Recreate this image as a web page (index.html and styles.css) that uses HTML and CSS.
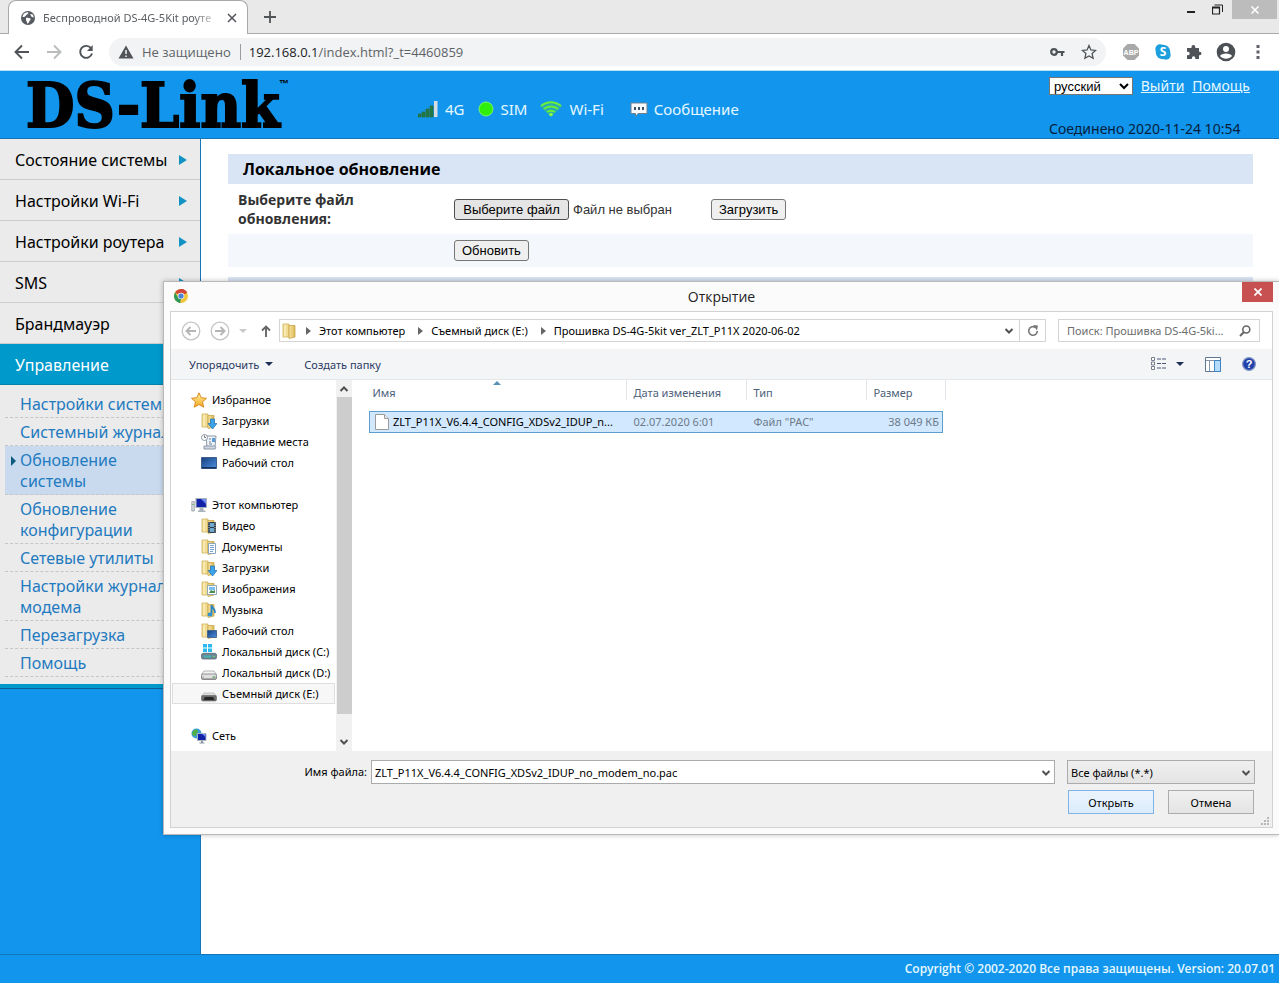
FILE: index.html
```html
<!DOCTYPE html>
<html lang="ru">
<head>
<meta charset="utf-8">
<title>Беспроводной DS-4G-5Kit роутер</title>
<link rel="stylesheet" href="styles.css">
</head>
<body>
<svg class="defs" aria-hidden="true">
  <defs>
    <linearGradient id="gFolder" x1="0" x2="1" y1="0" y2="0"><stop offset="0" stop-color="#f6e3a0"/><stop offset="1" stop-color="#dcb955"/></linearGradient>
    <linearGradient id="gScreen" x1="0" x2="1" y1="0" y2="1"><stop offset="0" stop-color="#16407f"/><stop offset="1" stop-color="#4d8ee0"/></linearGradient>
    <linearGradient id="gDisk" x1="0" x2="0" y1="0" y2="1"><stop offset="0" stop-color="#f4f4f4"/><stop offset="1" stop-color="#9a9a9a"/></linearGradient>
    <linearGradient id="gStar" x1="0" x2="0" y1="0" y2="1"><stop offset="0" stop-color="#fff3a0"/><stop offset="1" stop-color="#f5a623"/></linearGradient>
  </defs>
  <symbol id="folder" viewBox="0 0 16 16"><path d="M1 1h6v13H1z" fill="#f1dc93" stroke="#cfae55" stroke-width=".8"/><path d="M7 2.500h6V14l-6 1.500z" fill="url(#gFolder)" stroke="#c9a548" stroke-width=".8"/><path d="M3 1.500v12" stroke="#fff6cf"/></symbol>
  <symbol id="down" viewBox="0 0 16 16"><use href="#folder"/><path d="M9.500 6h4v4.500H16L11.500 16 7 10.500h2.500z" fill="#3ba4e8" stroke="#1e6fb5" stroke-width=".7"/></symbol>
  <symbol id="recent" viewBox="0 0 16 16"><path d="M5 2h10l-1 11H6z" fill="#eef3f8" stroke="#8b98a6"/><path d="M3 12h11c1 0 1 3 0 3H3z" fill="#cfd8e2" stroke="#8b98a6"/><path d="M8 5h2M8 8h2M8 10h3" stroke="#6e8299"/><path d="M11 4h3v4h-3z" fill="#5a9bd8"/><circle cx="3.500" cy="3.500" r="3" fill="#fff" stroke="#8a97a5"/><path d="M3.500 1.500v2h1.500" stroke="#555" fill="none" stroke-width=".8"/></symbol>
  <symbol id="desktop" viewBox="0 0 16 16"><path d="M.5 2.500h15v11H.5z" fill="url(#gScreen)" stroke="#3f5f8a"/><path d="M1 12h14v1.500H1z" fill="#16345f"/></symbol>
  <symbol id="pc" viewBox="0 0 16 16"><path d="M5 1.500h10.500v9H5z" fill="#1222a8" stroke="#a8b2bd" stroke-width="1.200"/><path d="M10 2h5v5z" fill="#6d8bf0"/><path d="M8.500 11h4v2.500h2V15H7v-1.500h1.500z" fill="#aab2bb"/><path d="M.8 4.500h2.500V14H.8z" fill="#d8dde2" stroke="#858e97" stroke-width=".7"/><path d="M1.500 7.500h1" stroke="#30a030"/></symbol>
  <symbol id="video" viewBox="0 0 16 16"><use href="#folder"/><path d="M7 4h8v11H7z" fill="#2c3b47"/><path d="M9 5h4v4H9zM9 10h4v4H9z" fill="#6fa8cf"/><path d="M8 4.500v10M14 4.500v10" stroke="#dbe4ea" stroke-dasharray="1 1.300"/></symbol>
  <symbol id="docs" viewBox="0 0 16 16"><use href="#folder"/><path d="M7.500 4.500h7v10h-7z" fill="#fff" stroke="#8aa3bd"/><path d="M9 6.500h4M9 8.500h4M9 10.500h4M9 12.500h3" stroke="#4f8cc9" stroke-width=".8"/></symbol>
  <symbol id="images" viewBox="0 0 16 16"><use href="#folder"/><path d="M6.500 4.500h9v9h-9z" fill="#fff" stroke="#90a6ba"/><path d="M8 6h6v3H8z" fill="#76bdf0"/><path d="M8 12l2-3 2 1 2-1v3z" fill="#4c8a56"/></symbol>
  <symbol id="music" viewBox="0 0 16 16"><use href="#folder"/><path d="M10.500 3v9M10.500 3c0 3 4 3 3.500 8" fill="none" stroke="#2583c9" stroke-width="1.800"/><ellipse cx="9" cy="12.500" rx="2.400" ry="1.900" fill="#2f93d8"/></symbol>
  <symbol id="fdesk" viewBox="0 0 16 16"><use href="#folder"/><path d="M6.500 7.500h9v7h-9z" fill="url(#gScreen)" stroke="#4a698f"/></symbol>
  <symbol id="disk" viewBox="0 0 16 16"><path d="M3 6h10l2.500 3.500H.5z" fill="#f4f4f4" stroke="#999" stroke-width=".7"/><rect x=".5" y="9" width="15" height="5.500" rx="1.500" fill="url(#gDisk)" stroke="#777" stroke-width=".8"/><path d="M3 12h8" stroke="#fff"/><path d="M12 12h2" stroke="#40b040"/></symbol>
  <symbol id="windisk" viewBox="0 0 16 16"><path d="M2 0h4v3.500H2zM7 0h4v3.500H7zM2 4.500h4V8H2zM7 4.500h4V8H7z" fill="#29b9ee"/><path d="M3 8h11l1.500 2H.5z" fill="#dfe4e8"/><rect x=".5" y="9.500" width="15" height="5.500" rx="1.500" fill="#6c8796" stroke="#5c6b76" stroke-width=".8"/><path d="M3 12.500h7" stroke="#47b3ad" stroke-width="2"/><path d="M12 12.500h2" stroke="#62d562"/></symbol>
  <symbol id="usb" viewBox="0 0 16 16"><path d="M3 7h10l2.500 3H.5z" fill="#dedede" stroke="#aaa" stroke-width=".6"/><rect x=".5" y="9.500" width="15" height="5.500" rx="1.500" fill="#6c6c6c" stroke="#666" stroke-width=".6"/><path d="M4 11h8l1.500 3h-11z" fill="#262626"/></symbol>
  <symbol id="net" viewBox="0 0 16 16"><circle cx="5.500" cy="5.500" r="5" fill="#3a9cd9"/><path d="M2 3c2-2 5-2 5 0s-2 2-2 4-3 1-4-1zM7 7l3-1-1 3z" fill="#52b043"/><path d="M6.500 5.500H15v7H6.500z" fill="#1222a8" stroke="#a9b4bf"/><path d="M11 6h3.500v3z" fill="#6d8bf0"/><path d="M10 13h2v1.500h1.500v1h-5v-1H10z" fill="#8d98a3"/></symbol>
  <symbol id="star" viewBox="0 0 16 16"><path d="M8 .8l2.200 4.900 5.300.6-4 3.600 1.200 5.300L8 12.500l-4.700 2.700 1.200-5.300-4-3.600 5.300-.6z" fill="url(#gStar)" stroke="#d98a1f"/></symbol>
  <symbol id="chev" viewBox="0 0 10 8"><path d="M1.500 2L5 5.500 8.500 2" fill="none" stroke="#505050" stroke-width="2"/></symbol>
  <symbol id="tri" viewBox="0 0 5 8"><path d="M0 0l5 4-5 4z" fill="#666"/></symbol>
</svg>

<div class="chrome">
  <div class="tabs">
    <div class="tab">
      <svg width="16" height="16" viewBox="0 0 16 16"><circle cx="8" cy="8" r="7" fill="#555b61"/><path d="M3 5c1-2 3-3 5-2.800C9 3 8 4 7 4.500S6 6 5 6.500 4 7 2.500 7zM6 8c2-.5 3 .5 4.500.5.500 1.500-1 2-1.500 3.500-.5 1-1 1.500-2 1.500.5-2-1-2.500-1-3.500zM10 4l3 .5.700 3-2-.5z" fill="#fff"/></svg>
      <span class="tab-title">Беспроводной DS-4G-5Kit роуте</span>
      <button class="plain" type="button" aria-label="Закрыть вкладку"><svg width="10" height="10" viewBox="0 0 10 10"><path d="M1 1l8 8M9 1L1 9" stroke="#505458" stroke-width="1.500"/></svg></button>
    </div>
    <button class="plain newtab" type="button" aria-label="Новая вкладка"><svg width="12" height="12" viewBox="0 0 12 12"><path d="M6 0v12M0 6h12" stroke="#505458" stroke-width="1.800"/></svg></button>
    <div class="win">
      <button class="plain" type="button" aria-label="Свернуть"><svg width="8" height="8" viewBox="0 0 8 8"><path d="M0 6h8" stroke="#222" stroke-width="2"/></svg></button>
      <button class="plain" type="button" aria-label="Развернуть"><svg width="11" height="11" viewBox="0 0 11 11"><path d="M.5 3h7v7h-7zM.5 4h7" fill="none" stroke="#222" stroke-width="1.200"/><path d="M2.500 1h8v7" fill="none" stroke="#222"/></svg></button>
      <button class="plain win-close" type="button" aria-label="Закрыть"><svg width="8" height="8" viewBox="0 0 8 8"><path d="M.5.5l7 7M7.500.5l-7 7" stroke="#fff" stroke-width="1.500"/></svg></button>
    </div>
  </div>
  <div class="toolbar">
    <button class="plain" type="button" aria-label="Назад"><svg width="16" height="16" viewBox="0 0 16 16"><path d="M15 8H2M8 1.500L1.500 8 8 14.500" fill="none" stroke="#505458" stroke-width="1.900"/></svg></button>
    <button class="plain" type="button" aria-label="Вперёд"><svg width="16" height="16" viewBox="0 0 16 16"><path d="M1 8h13M8 1.500L14.500 8 8 14.500" fill="none" stroke="#b9bbbd" stroke-width="1.900"/></svg></button>
    <button class="plain" type="button" aria-label="Обновить страницу"><svg width="16" height="16" viewBox="0 0 16 16"><path d="M13 4.200A6 6 0 1 0 14 9.500" fill="none" stroke="#505458" stroke-width="1.900"/><path d="M14.700 1v6H9z" fill="#505458"/></svg></button>
    <div class="omnibox">
      <svg width="16" height="14" viewBox="0 0 16 14"><path d="M8 .5L15.500 13.500H.5z" fill="#505458"/><path d="M8 5v4M8 10.500v1.500" stroke="#f1f3f4" stroke-width="1.500"/></svg>
      <span class="secure">Не защищено</span>
      <span class="url"><b>192.168.0.1</b>/index.html?_t=4460859</span>
      <svg width="15" height="10" viewBox="0 0 15 10"><circle cx="4" cy="5" r="2.800" fill="none" stroke="#505458" stroke-width="2.200"/><path d="M6 5h8.500M12 5v4" stroke="#505458" stroke-width="2.200" fill="none"/></svg>
      <svg width="16" height="16" viewBox="0 0 16 16"><path d="M8 1.500l1.900 4.400 4.700.5-3.500 3.200 1 4.700L8 11.900l-4.100 2.400 1-4.700L1.400 6.400l4.700-.5z" fill="none" stroke="#505458" stroke-width="1.300"/></svg>
    </div>
    <div class="exts">
      <svg width="18" height="18" viewBox="0 0 18 18"><path d="M5.500 1h7L17 5.500v7L12.500 17h-7L1 12.500v-7z" fill="#a9a9a9"/><text x="9" y="11.500" text-anchor="middle" class="abp">ABP</text></svg>
      <svg width="18" height="18" viewBox="0 0 18 18"><circle cx="9" cy="9" r="7.300" fill="#1e9fdd"/><circle cx="6" cy="6" r="4.700" fill="#1e9fdd"/><circle cx="12" cy="12" r="4.700" fill="#1e9fdd"/><text x="9" y="13" text-anchor="middle" class="skype">S</text></svg>
      <svg width="16" height="16" viewBox="0 0 16 16"><path d="M1 4h4.500V2.800a1.900 1.900 0 0 1 3.800 0V4H13v3.700h.7a1.800 1.800 0 0 1 0 3.600H13V15H9.300v-1a1.700 1.700 0 0 0-3.400 0v1H1v-3.800h1a1.700 1.700 0 0 0 0-3.400H1z" fill="#505458"/></svg>
      <svg width="20" height="20" viewBox="0 0 20 20"><circle cx="10" cy="10" r="9.300" fill="#4c5055"/><circle cx="10" cy="7" r="3" fill="#fff"/><path d="M4 14c1-3.500 11-3.500 12 0-3 3.500-9 3.500-12 0z" fill="#fff"/></svg>
      <svg width="4" height="14" viewBox="0 0 4 14"><path d="M.5 0h3v3h-3zM.5 5.500h3v3h-3zM.5 11h3v3h-3z" fill="#5f6368"/></svg>
    </div>
  </div>
</div>

<header class="header">
  <h1 class="logo">DS-Link<sup>™</sup></h1>
  <ul class="status">
    <li><svg width="20" height="17" viewBox="0 0 20 17"><path d="M0 13h3v3H0zM4 11h3v5H4zM8 8h3v8H8zM12 5h3v11h-3z" fill="#1d7a45" stroke="#2c7040" stroke-width=".8"/><path d="M16 0h3.500v16H16z" fill="#d5dde2"/></svg>4G</li>
    <li><svg width="16" height="16" viewBox="0 0 16 16"><circle cx="8" cy="8" r="7" fill="#2ff00a" stroke="#7cf46d"/></svg>SIM</li>
    <li><svg width="22" height="16" viewBox="0 0 22 16"><path d="M0 5.500C6-1 16-1 22 5.500L11 16z" fill="#3cc07a" opacity=".55"/><path d="M1 5c6-5 14-5 20 0M4 8c4-3.500 10-3.500 14 0M7 11c3-2 5-2 8 0" fill="none" stroke="#6df03c" stroke-width="2"/><circle cx="11" cy="13.500" r="1.800" fill="#8cff3c"/></svg>Wi-Fi</li>
    <li class="msg"><svg width="18" height="16" viewBox="0 0 18 16"><path d="M1 2h16v10.500H8L5.500 15.500v-3H1z" fill="#f6f8fa" stroke="#6f8191"/><path d="M4 6h2v3H4zM8 6h2v3H8zM12 6h2v3h-2z" fill="#3b5368"/></svg>Сообщение</li>
  </ul>
  <div class="account">
    <div class="account-row">
      <select class="lang" aria-label="Язык"><option>русский</option></select>
      <a href="#">Выйти</a>
      <a href="#">Помощь</a>
    </div>
    <p>Соединено 2020-11-24 10:54</p>
  </div>
</header>

<div class="stage">
  <nav class="sidebar">
    <ul class="menu">
      <li><a class="more" href="#">Состояние системы</a></li>
      <li><a class="more" href="#">Настройки Wi-Fi</a></li>
      <li><a class="more" href="#">Настройки роутера</a></li>
      <li><a class="more" href="#">SMS</a></li>
      <li><a class="more" href="#">Брандмауэр</a></li>
      <li><a class="active" href="#">Управление</a></li>
    </ul>
    <ul class="submenu">
      <li><a href="#">Настройки системы</a></li>
      <li><a href="#">Системный журнал</a></li>
      <li class="current"><a href="#">Обновление системы</a></li>
      <li><a href="#">Обновление конфигурации</a></li>
      <li><a href="#">Сетевые утилиты</a></li>
      <li><a href="#">Настройки журнала модема</a></li>
      <li><a href="#">Перезагрузка</a></li>
      <li><a href="#">Помощь</a></li>
    </ul>
  </nav>

  <main class="content">
    <h2>Локальное обновление</h2>
    <div class="row">
      <strong>Выберите файл обновления:</strong>
      <div class="row-ctl">
        <button class="btn pressed" type="button">Выберите файл</button>
        <span class="nofile">Файл не выбран</span>
        <button class="btn" type="button">Загрузить</button>
      </div>
    </div>
    <div class="row alt">
      <span></span>
      <div class="row-ctl"><button class="btn" type="button">Обновить</button></div>
    </div>
    <div class="next"></div>
  </main>

  <section class="dialog" role="dialog" aria-labelledby="dlg-title">
    <div class="dlg-title">
      <svg width="14" height="14" viewBox="0 0 14 14"><circle cx="7" cy="7" r="7" fill="#f0c63c"/><path d="M7 7L1 3.400A7 7 0 0 1 13.100 3.700z" fill="#cf4638"/><path d="M7 0a7 7 0 0 1 6.100 3.700H7z" fill="#cf4638"/><path d="M1 3.400L4.500 9 6.500 14A7 7 0 0 1 1 3.400z" fill="#2f9957"/><path d="M4 8.500l3 1.500-1 4-3-2z" fill="#2f9957"/><circle cx="7" cy="7" r="3.300" fill="#f4f4f4"/><circle cx="7" cy="7" r="2.600" fill="#4a83d4"/></svg>
      <h3 id="dlg-title">Открытие</h3>
      <button class="plain dlg-close" type="button" aria-label="Закрыть"><svg width="8" height="8" viewBox="0 0 8 8"><path d="M.5.5l7 7M7.500.5l-7 7" stroke="#fff" stroke-width="1.700"/></svg></button>
    </div>
    <div class="frame">
      <div class="nav">
        <button class="plain" type="button" aria-label="Назад"><svg width="20" height="20" viewBox="0 0 20 20"><circle cx="10" cy="10" r="8.800" fill="none" stroke="#c4c4c4" stroke-width="1.300"/><path d="M15 10H6M9.500 6L5.500 10l4 4" fill="none" stroke="#b5b5b5" stroke-width="1.900"/></svg></button>
        <button class="plain" type="button" aria-label="Вперёд"><svg width="20" height="20" viewBox="0 0 20 20"><circle cx="10" cy="10" r="8.800" fill="none" stroke="#c4c4c4" stroke-width="1.300"/><path d="M5 10h9M10.500 6l4 4-4 4" fill="none" stroke="#b5b5b5" stroke-width="1.900"/></svg></button>
        <button class="plain" type="button" aria-label="Последние расположения"><svg width="8" height="4" viewBox="0 0 8 4"><path d="M0 0h8L4 4z" fill="#c9c9c9"/></svg></button>
        <button class="plain up" type="button" aria-label="Вверх"><svg width="10" height="12" viewBox="0 0 10 12"><path d="M5 12V2M1 5.500L5 1.500l4 4" fill="none" stroke="#666" stroke-width="1.900"/></svg></button>
        <div class="address">
          <svg width="16" height="16"><use href="#folder"/></svg>
          <svg class="sep" width="5" height="8"><use href="#tri"/></svg><span>Этот компьютер</span>
          <svg class="sep" width="5" height="8"><use href="#tri"/></svg><span>Съемный диск (E:)</span>
          <svg class="sep" width="5" height="8"><use href="#tri"/></svg><span>Прошивка DS-4G-5kit ver_ZLT_P11X 2020-06-02</span>
          <button class="plain drop" type="button" aria-label="Предыдущие расположения"><svg width="10" height="8"><use href="#chev"/></svg></button>
          <button class="plain refresh" type="button" aria-label="Обновить"><svg width="12" height="12" viewBox="0 0 12 12"><path d="M8.500 2.500A4.300 4.300 0 1 0 10.300 6" fill="none" stroke="#777" stroke-width="1.600"/><path d="M6 0l5 .5-1 5z" fill="#777"/></svg></button>
        </div>
        <div class="search">
          <input type="text" aria-label="Поиск" placeholder="Поиск: Прошивка DS-4G-5ki...">
          <svg width="12" height="12" viewBox="0 0 12 12"><circle cx="7.300" cy="4.500" r="3.500" fill="none" stroke="#666" stroke-width="1.600"/><path d="M5 7L1 11" stroke="#666" stroke-width="2"/></svg>
        </div>
      </div>

      <div class="commands">
        <button class="plain" type="button">Упорядочить <svg width="8" height="4" viewBox="0 0 8 4"><path d="M0 0h8L4 4z" fill="#1e3058"/></svg></button>
        <button class="plain" type="button">Создать папку</button>
        <span class="views">
          <button class="plain" type="button" aria-label="Вид"><svg width="16" height="14" viewBox="0 0 16 14"><path d="M.5.500h3v3h-3zM.5 5h3v3h-3zM.5 9.500h3v3h-3z" fill="#fff" stroke="#777d8a"/><path d="M6 2h4M11 2h4M6 6.500h4M11 6.500h4M6 11h4M11 11h4" stroke="#4a5878"/></svg><svg width="8" height="4" viewBox="0 0 8 4"><path d="M0 0h8L4 4z" fill="#1e3058"/></svg></button>
          <button class="plain" type="button" aria-label="Область просмотра"><svg width="16" height="15" viewBox="0 0 16 15"><path d="M.5.500h15v14H.5z" fill="#fff" stroke="#5f7890"/><path d="M1 3.500h14M4.500 4v10" stroke="#8796a6"/><path d="M9.500 3.500h6v11h-6z" fill="#b5dcfb" stroke="#3c86c6"/></svg></button>
          <button class="plain" type="button" aria-label="Справка"><svg width="14" height="14" viewBox="0 0 14 14"><circle cx="7" cy="7" r="6.400" fill="#2142a8" stroke="#8597c8" stroke-width="1.200"/><text x="7" y="11" text-anchor="middle" class="help">?</text></svg></button>
        </span>
      </div>

      <div class="panes">
        <div class="tree">
          <ul>
            <li class="root"><svg width="16" height="16"><use href="#star"/></svg>Избранное</li>
            <li><svg width="16" height="16"><use href="#down"/></svg>Загрузки</li>
            <li><svg width="16" height="16"><use href="#recent"/></svg>Недавние места</li>
            <li><svg width="16" height="16"><use href="#desktop"/></svg>Рабочий стол</li>
          </ul>
          <ul>
            <li class="root"><svg width="16" height="16"><use href="#pc"/></svg>Этот компьютер</li>
            <li><svg width="16" height="16"><use href="#video"/></svg>Видео</li>
            <li><svg width="16" height="16"><use href="#docs"/></svg>Документы</li>
            <li><svg width="16" height="16"><use href="#down"/></svg>Загрузки</li>
            <li><svg width="16" height="16"><use href="#images"/></svg>Изображения</li>
            <li><svg width="16" height="16"><use href="#music"/></svg>Музыка</li>
            <li><svg width="16" height="16"><use href="#fdesk"/></svg>Рабочий стол</li>
            <li><svg width="16" height="16"><use href="#windisk"/></svg>Локальный диск (C:)</li>
            <li><svg width="16" height="16"><use href="#disk"/></svg>Локальный диск (D:)</li>
            <li class="sel"><svg width="16" height="16"><use href="#usb"/></svg>Съемный диск (E:)</li>
          </ul>
          <ul>
            <li class="root"><svg width="16" height="16"><use href="#net"/></svg>Сеть</li>
          </ul>
        </div>
        <div class="scroll">
          <svg class="flip" width="10" height="8"><use href="#chev"/></svg>
          <span class="thumb"></span>
          <svg width="10" height="8"><use href="#chev"/></svg>
        </div>
        <div class="files">
          <table>
            <colgroup><col class="c-name"><col class="c-date"><col class="c-type"><col class="c-size"></colgroup>
            <thead><tr><th class="sorted">Имя</th><th>Дата изменения</th><th>Тип</th><th>Размер</th></tr></thead>
            <tbody><tr>
              <td class="name"><span><svg width="14" height="16" viewBox="0 0 14 16"><path d="M.5.500h9l4 4v11H.5z" fill="#fff" stroke="#9b9b9b"/><path d="M9.500.5v4h4" fill="#eee" stroke="#9b9b9b"/></svg>ZLT_P11X_V6.4.4_CONFIG_XDSv2_IDUP_n...</span></td>
              <td>02.07.2020 6:01</td><td>Файл "PAC"</td><td class="size">38 049 КБ</td>
            </tr></tbody>
          </table>
        </div>
      </div>

      <form class="dlg-foot">
        <label for="fname">Имя файла:</label>
        <div class="combo fname"><input id="fname" type="text" value="ZLT_P11X_V6.4.4_CONFIG_XDSv2_IDUP_no_modem_no.pac"><svg width="10" height="8"><use href="#chev"/></svg></div>
        <div class="combo ftype"><select aria-label="Тип файлов"><option>Все файлы (*.*)</option></select><svg width="10" height="8"><use href="#chev"/></svg></div>
        <div class="actions">
          <button class="wbtn primary" type="button">Открыть</button>
          <button class="wbtn" type="button">Отмена</button>
        </div>
        <svg class="grip" width="8" height="8" viewBox="0 0 8 8"><path d="M6 0h2v2H6zM3 3h2v2H3zM6 3h2v2H6zM0 6h2v2H0zM3 6h2v2H3zM6 6h2v2H6z" fill="#b8b8b8"/></svg>
      </form>
    </div>
  </section>
</div>

<footer class="footer">Copyright © 2002-2020 Все права защищены. Version: 20.07.01</footer>
</body>
</html>
```
FILE: styles.css
```css
* { box-sizing: border-box; }
body {
  margin: 0;
  min-height: 100vh;
  display: flex;
  flex-direction: column;
  font-family: "Noto Sans", "Open Sans", sans-serif;
  font-size: 16px;
  color: #000;
  background: #fff;
}
ul, h1, h2, h3, p { margin: 0; padding: 0; list-style: none; }
svg { flex: none; display: block; }
button, input, select { font: inherit; color: inherit; }
.defs { position: absolute; width: 0; height: 0; }
.plain { border: 0; padding: 0; background: none; display: flex; align-items: center; justify-content: center; }

/* browser window */
.chrome { font-family: "Open Sans", sans-serif; }
.tabs { display: flex; height: 34px; background: #e9e9e9; border-bottom: 1px solid #a9a9a9; }
.tab {
  display: flex; align-items: center; gap: 7px;
  width: 240px; height: 34px; margin-left: 8px; padding: 0 10px 0 11px;
  background: #fff; border: 1px solid #a9a9a9; border-bottom: 0; border-radius: 8px 8px 0 0;
  font: 11px "Noto Sans", sans-serif; color: #5a5e62;
}
.tab-title {
  flex: 1; overflow: hidden; white-space: nowrap;
  mask-image: linear-gradient(to right, #000 85%, transparent);
}
.newtab { margin-left: 16px; }
.win { display: flex; margin-left: auto; align-items: flex-start; gap: 17px; padding-right: 2px; }
.win .plain { height: 19px; }
.win .win-close { width: 45px; background: #bcbcbc; margin-left: -8px; }
.toolbar { display: flex; align-items: center; gap: 16px; height: 37px; padding: 0 19px 0 14px; border-bottom: 1px solid #b9dff2; }
.omnibox {
  flex: 1; display: flex; align-items: center; gap: 8px;
  height: 28px; margin-left: -1px; padding: 0 9px; border-radius: 14px;
  background: #f1f3f4; color: #5f6368; font-size: 13px;
}
.secure { padding-right: 9px; border-right: 1px solid #9a9da0; line-height: 16px; }
.url { flex: 1; }
.url b { font-weight: 400; color: #202124; }
.omnibox svg:last-child { margin-left: 8px; }
.exts { display: flex; align-items: center; gap: 14px; }
.exts svg:last-child { margin-left: 6px; }
.abp { font: bold 7px "Liberation Sans", sans-serif; fill: #fff; }
.skype { font: bold 12px "Open Sans", sans-serif; fill: #fff; }

/* router page header */
.header { display: flex; height: 68px; padding-left: 26px; background: #1296ed; border-bottom: 1px solid #1776b8; }
.logo {
  width: 392px; white-space: nowrap;
  font: bold 62px/70px "DejaVu Serif Condensed", "DejaVu Serif", serif;
  -webkit-text-stroke: 2px #000;
}
.logo sup { font: bold 10px/10px "Liberation Sans", sans-serif; vertical-align: 40px; margin-left: -1px; -webkit-text-stroke: 0; }
.status { display: flex; align-items: center; gap: 13px; padding-top: 9px; color: #e6f8ff; font-size: 15px; }
.status li { display: flex; align-items: center; gap: 7px; }
.status .msg { margin-left: 13px; gap: 6px; }
.account { min-width: 230px; margin-left: auto; padding: 5px 29px 0 0; font-size: 14px; display: flex; flex-direction: column; justify-content: space-between; }
.account-row { display: flex; align-items: center; justify-content: space-between; gap: 6px; line-height: 20px; }
.account a { color: #e6f8ff; }
.account p { line-height: 18px; color: #06203c; white-space: nowrap; }
.lang { width: 84px; height: 18px; padding: 0; font: 13px "Liberation Sans", sans-serif; background: #fff; border: 1px solid #767676; color: #000; }

/* body */
.stage { flex: 1; display: flex; position: relative; }
.sidebar { width: 201px; background: #1296ed; border-right: 1px solid #1776b8; }
.menu { background: #ebebeb; }
.menu a {
  display: flex; align-items: center; justify-content: space-between;
  height: 41px; padding: 2px 13px 0 15px; border-bottom: 1px solid #ccc;
  color: #000; text-decoration: none; font-size: 16px; white-space: nowrap;
}
.menu .more::after { content: ""; border: 5px solid transparent; border-left: 8px solid #1492c4; border-right: 0; }
.menu .active { background: #09c; color: #fff; border-color: #0681aa; }
.submenu { padding: 5px 0 7px 5px; background: #ebebeb; border-bottom: 4px solid #09c; box-shadow: 0 1px #0b5f99; }
.submenu li { padding: 4px 15px 2px 15px; border-bottom: 1px dashed #c6c6c6; line-height: 21px; position: relative; }
.submenu a { color: #1f7ac0; text-decoration: none; }
.submenu .current { background: #c9daef; }
.current::before { content: ""; position: absolute; left: 6px; top: 10px; border: 5px solid transparent; border-left: 5px solid #0d5c80; border-right: 0; }

.content { flex: 1; padding: 15px 26px 0 27px; font-family: "Open Sans", sans-serif; }
.content h2 { height: 30px; padding-left: 15px; background: #d9e4f4; font-size: 16px; line-height: 30px; }
.row { display: grid; grid-template-columns: 216px 1fr; align-items: center; min-height: 50px; padding-left: 10px; color: #333; font-size: 14px; line-height: 19px; }
.row strong { padding-right: 60px; }
.row-ctl { display: flex; align-items: center; }
.row.alt { min-height: 33px; background: #f4f7fb; }
.btn { height: 21px; padding: 0 7px; border: 1px solid #767676; border-radius: 3px; background: #efefef; font: 13px/17px "Liberation Sans", sans-serif; color: #000; }
.pressed { min-width: 115px; background: #e5e5e5; border-color: #4f4f4f; }
.nofile { width: 142px; padding-left: 4px; font: 13px "Liberation Sans", sans-serif; }
.next { height: 30px; margin-top: 10px; background: #d9e4f4; }

/* file dialog */
.dialog {
  position: absolute; top: 142px; left: 163px; right: 0;
  padding: 0 6px 6px; background: #fbfbfb;
  border: 1px solid #b9b9b9; border-right: 0;
  box-shadow: 0 0 5px rgba(0,0,0,.25);
  font-size: 11px;
}
.dlg-title { display: grid; grid-template-columns: 31px 1fr 31px; align-items: start; height: 29px; }
.dlg-title > svg { margin: 7px 0 0 4px; }
.dlg-title h3 { font: 14px/30px "Open Sans", sans-serif; text-align: center; color: #222; }
.dlg-close { height: 20px; background: #c75050; }
.frame { border: 1px solid #d2d2d2; background: #fff; }
.nav { display: flex; align-items: center; height: 37px; padding: 0 12px 0 10px; gap: 9px; }
.nav .up { margin: 0 -1px 0 5px; }
.address { flex: 1; display: flex; align-items: center; height: 23px; padding-left: 2px; border: 1px solid #d5d5d5; white-space: nowrap; }
.address .sep { margin: 0 8px; }
.address span + .sep { margin-left: 13px; }
.drop { margin-left: auto; width: 20px; }
.nav .refresh { width: 26px; align-self: stretch; border-left: 1px solid #d5d5d5; }
.search { display: flex; align-items: center; width: 202px; height: 23px; margin-left: 3px; padding: 0 8px; border: 1px solid #d5d5d5; }
.search input { flex: 1; min-width: 0; border: 0; padding: 0; background: none; }
.search input::placeholder { color: #6d6d6d; opacity: 1; }
.commands { display: flex; align-items: center; height: 31px; padding: 0 16px 0 18px; gap: 31px; background: #f4f5f7; border-bottom: 1px solid #e4e6e9; color: #2a3a63; }
.commands .plain { gap: 6px; }
.views { display: flex; margin-left: auto; gap: 21px; }
.views .plain { gap: 9px; }
.help { font: bold 11px "Liberation Sans", sans-serif; fill: #fff; }

.panes { display: flex; height: 371px; }
.tree { width: 165px; padding-top: 9px; overflow: hidden; }
.tree ul { margin-bottom: 21px; }
.tree li { display: flex; align-items: center; gap: 5px; height: 21px; padding-left: 28px; margin-left: 1px; border: 1px solid transparent; white-space: nowrap; }
.tree .root { padding-left: 18px; }
.tree .sel { margin-right: 1px; background: #f7f7f7; border-color: #dedede; }
.scroll { display: flex; flex-direction: column; align-items: center; justify-content: space-between; width: 16px; padding: 5px 0; background: #f1f1f1; }
.thumb { flex: 1; width: 15px; margin: 4px 0 24px; background: #cdcdcd; }
.flip { transform: scaleY(-1); }
.files { flex: 1; padding-left: 17px; }
.files table { width: 574px; table-layout: fixed; border-collapse: collapse; }
.c-name { width: 257px; }
.c-date, .c-type { width: 120px; }
.files th { position: relative; height: 31px; padding: 0 0 6px 3px; text-align: left; font-weight: 400; color: #4c607a; border: 0; }
.files th + th { padding-left: 7px; }
.files th::after { content: ""; position: absolute; right: 0; top: 0; width: 1px; height: 20px; background: #e3e6ea; }
.files th:last-child::after { right: -3px; }
.sorted::before { content: ""; position: absolute; left: 123px; top: 1px; border: 4px solid transparent; border-bottom: 4px solid #5791b4; border-top: 0; }
.files td { height: 21px; padding: 0 3px 0 7px; color: #6d7a88; background: #d1e8ff; border: 1px solid #5f9fd0; border-width: 1px 0; white-space: nowrap; }
.files td:first-child { padding-left: 5px; border-left-width: 1px; }
.files td:last-child { border-right-width: 1px; text-align: right; }
.name span { display: flex; align-items: center; gap: 4px; color: #000; }

.dlg-foot { position: relative; display: grid; grid-template-columns: 196px 1fr 196px; gap: 6px 4px; height: 76px; padding: 9px 17px 0 0; background: #f0f0f0; align-content: start; }
.dlg-foot label { text-align: right; line-height: 23px; }
.combo { position: relative; height: 24px; border: 1px solid #ababab; background: #fff; }
.combo input, .combo select { width: 100%; height: 100%; padding: 0 3px; border: 0; background: none; appearance: none; display: block; }
.combo svg { position: absolute; right: 3px; top: 8px; }
.ftype { margin-left: 8px; background: linear-gradient(#efefef, #e4e4e4); }
.actions { grid-column: 2 / 4; display: flex; justify-content: flex-end; gap: 14px; padding-right: 1px; }
.wbtn { width: 86px; height: 24px; padding: 0; border: 1px solid #acacac; background: linear-gradient(#f0f0f0, #e4e4e4); }
.primary { background: linear-gradient(#ebf4fc, #dcecfc); border-color: #7eb4ea; }
.grip { position: absolute; right: 3px; bottom: 2px; }

.footer { height: 29px; padding-right: 4px; background: #1296ed; border-top: 1px solid #1776b8; color: #e6f8ff; font: 600 12px/28px "Open Sans", sans-serif; text-align: right; }
```
